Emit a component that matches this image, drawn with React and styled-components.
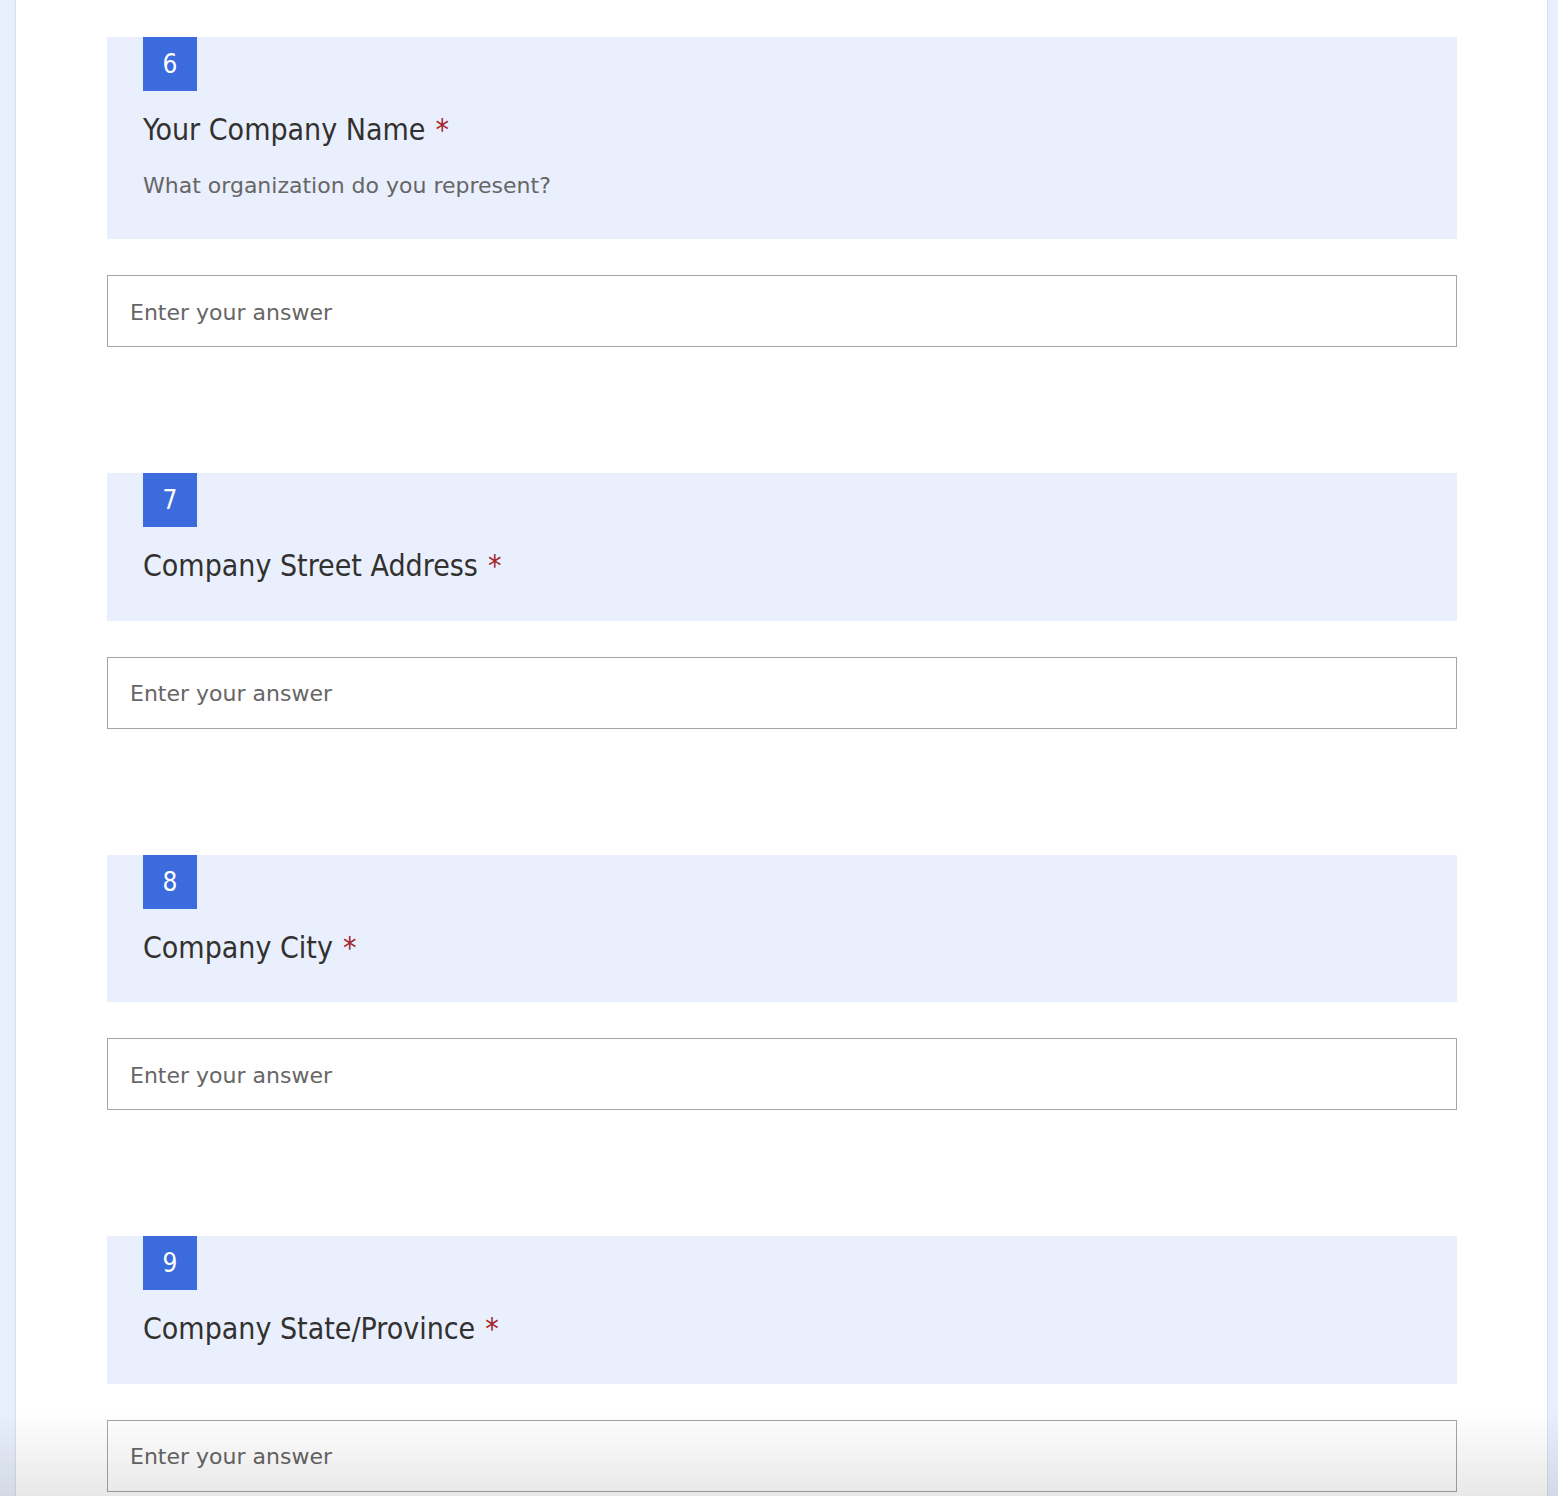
import styled, { createGlobalStyle } from "styled-components";

const GlobalStyle = createGlobalStyle`
  html, body {
    margin: 0;
    padding: 0;
    background: #e9effc;
  }
  * {
    box-sizing: border-box;
  }
`;

const Page = styled.div`
  min-height: 100vh;
  padding: 0 11px 0 16px;
  font-family: "DejaVu Sans", Verdana, sans-serif;
`;

const Panel = styled.main`
  background: #ffffff;
  min-height: 100vh;
  padding: 37px 90px 120px 91px;
  box-shadow: 0 0 2px rgba(40, 60, 110, 0.25);
  display: flex;
  flex-direction: column;
  gap: 126px;
`;

const Question = styled.section`
  display: flex;
  flex-direction: column;
  gap: 36px;
`;

const Header = styled.div`
  background: #e9effc;
  padding: 0 36px 36px;
`;

const Badge = styled.div`
  width: 54px;
  height: 54px;
  background: #3b6bdc;
  color: #ffffff;
  font-family: "DejaVu Sans Condensed", "DejaVu Sans", sans-serif;
  font-size: 26px;
  display: flex;
  align-items: center;
  justify-content: center;
`;

const Title = styled.h2`
  margin: 21px 0 0;
  font-family: "DejaVu Sans Condensed", "DejaVu Sans", sans-serif;
  font-size: 30px;
  font-weight: normal;
  line-height: 36.5px;
  color: #323130;
`;

const Required = styled.span`
  color: #a4262c;
  margin-left: 10px;
`;

const Subtitle = styled.p`
  margin: 20.5px 0 0;
  font-size: 22px;
  line-height: 34px;
  color: #666666;
`;

const AnswerInput = styled.input`
  height: 72px;
  width: 100%;
  border: 1px solid #a6a6a6;
  padding: 2px 22px 0;
  font-family: inherit;
  font-size: 22px;
  color: #333333;
  background: transparent;
  outline: none;
  &::placeholder {
    color: #666666;
  }
`;

const BottomFade = styled.div`
  position: fixed;
  left: 0;
  right: 0;
  bottom: 0;
  height: 86px;
  pointer-events: none;
  background: linear-gradient(rgba(0, 0, 0, 0), rgba(0, 0, 0, 0.09));
`;

const questions = [
  { n: 6, title: "Your Company Name", hint: "What organization do you represent?" },
  { n: 7, title: "Company Street Address" },
  { n: 8, title: "Company City" },
  { n: 9, title: "Company State/Province" },
];

const App = () => {
  return (
    <>
      <GlobalStyle />
      <Page>
        <Panel>
          {questions.map((q) => (
            <Question key={q.n}>
              <Header>
                <Badge>{q.n}</Badge>
                <Title>
                  {q.title}
                  <Required>*</Required>
                </Title>
                {q.hint && <Subtitle>{q.hint}</Subtitle>}
              </Header>
              <AnswerInput placeholder="Enter your answer" />
            </Question>
          ))}
        </Panel>
      </Page>
      <BottomFade />
    </>
  );
};

export default App;
